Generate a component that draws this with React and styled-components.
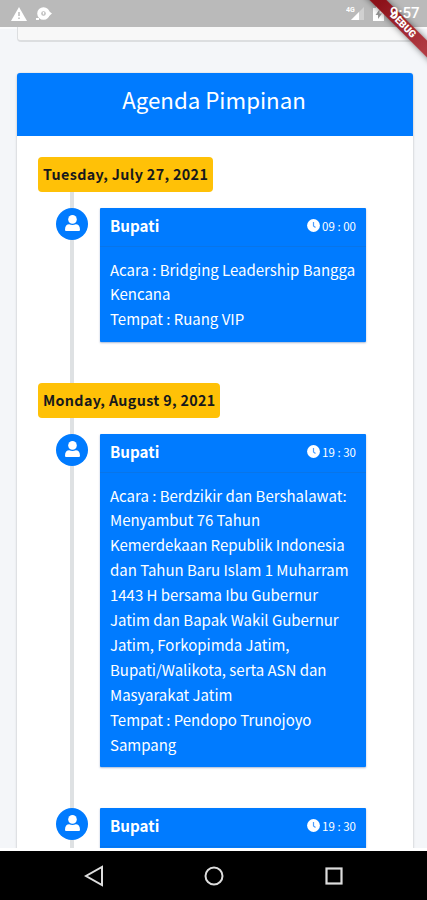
import React from "react"
import styled, { createGlobalStyle } from "styled-components";

const GlobalStyle = createGlobalStyle`
  * {
    box-sizing: border-box;
  }

  body {
    margin: 0;
    overflow: hidden;
    font-family: "Noto Sans CJK JP", "Noto Sans", sans-serif;
  }
`

const Screen = styled.div`
  position: relative;
  display: flex;
  flex-direction: column;
  width: 427px;
  height: 900px;
  overflow: hidden;
  background: #f4f6f9;
`

const StatusBar = styled.header`
  display: flex;
  align-items: center;
  flex: none;
  height: 27px;
  padding: 0 8px 0 11px;
  background: #bababa;
  box-shadow: 0 2px 0 #fbfcfd;
  color: #fff;
`

const StatusIcon = styled.svg`
  display: block;
  flex: none;
  margin-left: ${props => props.$gap || 0}px;
`

const StatusTime = styled.span`
  position: relative;
  z-index: 2;
  width: 29px;
  margin-left: 6px;
  font: 500 15px/27px Roboto, sans-serif;
  white-space: nowrap;
`

const Spacer = styled.div`
  flex: 1;
`

const Page = styled.main`
  flex: 1;
  min-height: 0;
  overflow: hidden;
  padding: 0 14px 0 17px;
`

const PreviousCard = styled.div`
  height: 15px;
  margin-bottom: 31px;
  border: 1px solid #dcdee0;
  border-top: 0;
  border-bottom-width: 2px;
  border-radius: 0 0 4px 4px;
  background: #f8f8f8;
`

const Card = styled.section`
  height: 900px;
  border-radius: 4px;
  background: #fff;
  box-shadow: 0 0 1px rgba(0, 0, 0, .2), 0 1px 3px rgba(0, 0, 0, .18);
`

const CardHeader = styled.h3`
  height: 63px;
  margin: 0;
  padding-right: 2px;
  border-radius: 3px 3px 0 0;
  background: #007bff;
  color: #fff;
  font-size: 22.3px;
  font-weight: 400;
  line-height: 52px;
  text-align: center;
`

const Timeline = styled.div`
  height: 800px;
  padding: 21px 0 0 21px;
  background: linear-gradient(#dee1e3, #dee1e3) 53px 21px / 4px 100% no-repeat;
`

const DateLabel = styled.div`
  width: ${props => props.$width}px;
  height: 35px;
  margin-bottom: 16px;
  padding-left: 5px;
  border-radius: 4px;
  background: #ffc107;
  color: #17191c;
  font-size: 14.3px;
  font-weight: 700;
  line-height: 34px;
  letter-spacing: ${props => props.$spacing}px;
  white-space: nowrap;
`

const Entry = styled.article`
  display: flex;
  align-items: flex-start;
  gap: 12px;
  padding-left: 18px;
  margin-bottom: ${props => props.$after}px;
`

const Avatar = styled.div`
  display: flex;
  align-items: center;
  justify-content: center;
  flex: none;
  width: 32px;
  height: 32px;
  padding-bottom: 2px;
  border-radius: 50%;
  background: #007bff;
`

const Item = styled.div`
  width: 266px;
  height: ${props => props.$height}px;
  border-radius: 1px;
  background: #007bff;
  color: #fff;
  box-shadow: 0 1px 2px rgba(0, 50, 130, .35);
`

const ItemHeader = styled.div`
  display: flex;
  align-items: center;
  height: 39px;
  padding: 0 10px 3px;
  border-bottom: 1px solid #0975e8;
`

const Name = styled.strong`
  flex: 1;
  padding-bottom: 2px;
  font-size: 15.2px;
  font-weight: 700;
`

const Time = styled.span`
  display: flex;
  align-items: center;
  gap: 2px;
  font-size: 11.5px;
  white-space: nowrap;
`

const ItemBody = styled.div`
  padding: 10.5px 0 0 10px;
  font-size: 15px;
  line-height: 24.9px;
  letter-spacing: -0.02px;
  white-space: pre;
`

const NavBar = styled.nav`
  display: flex;
  align-items: center;
  justify-content: center;
  flex: none;
  gap: 100px;
  height: 52px;
  border-top: 3px solid #fff;
  background: #000;
`

const DebugRibbon = styled.div`
  position: absolute;
  top: 19px;
  right: -31px;
  width: 110px;
  height: 12px;
  transform: rotate(45deg);
  background: linear-gradient(90deg, #8c1119 20%, #b13a42 80%);
  box-shadow: 0 0 6px rgba(0, 0, 0, .5);
  color: #fff;
  font: 900 10px/12px Roboto, sans-serif;
  text-align: center;
`

function Person() {
  return (
    <svg width="15" height="17" viewBox="0 0 15 17" fill="#fff">
      <circle cx="7.5" cy="4.4" r="4.3" />
      <path d="M0 14.7C0 11 1.8 9.3 4.2 9.3c2 1 4.6 1 6.6 0C13.2 9.3 15 11 15 14.7c0 .9-.6 1.4-1.4 1.4H1.4C.6 16.1 0 15.6 0 14.7Z" />
    </svg>
  )
}

function Clock() {
  return (
    <svg width="13" height="13" viewBox="0 0 13 13">
      <circle cx="6.5" cy="6.5" r="6.4" fill="#fff" />
      <path d="M6.5 3v4l2 1.5" fill="none" stroke="#4b9dff" strokeWidth="1.2" />
    </svg>
  )
}

const agenda = [
  {
    date: "Tuesday, July 27, 2021",
    width: 175,
    spacing: 0.36,
    time: "09 : 00",
    height: 134,
    after: 41,
    lines: ["Acara : Bridging Leadership Bangga", "Kencana", "Tempat : Ruang VIP"]
  },
  {
    date: "Monday, August 9, 2021",
    width: 182,
    spacing: 0.34,
    time: "19 : 30",
    height: 333,
    after: 41,
    lines: [
      "Acara : Berdzikir dan Bershalawat:",
      "Menyambut 76 Tahun",
      "Kemerdekaan Republik Indonesia",
      "dan Tahun Baru Islam 1 Muharram",
      "1443 H bersama Ibu Gubernur",
      "Jatim dan Bapak Wakil Gubernur",
      "Jatim, Forkopimda Jatim,",
      "Bupati/Walikota, serta ASN dan",
      "Masyarakat Jatim",
      "Tempat : Pendopo Trunojoyo",
      "Sampang"
    ]
  },
  { time: "19 : 30", height: 134, after: 0, lines: [] }
]

function App() {
  return (
    <Screen>
      <GlobalStyle />
      <StatusBar>
        <StatusIcon width="16" height="14" viewBox="0 0 16 14">
          <path d="M8 0 16 14H0Z" fill="#fff" />
          <path d="M8 5v4M8 10.5v1.5" stroke="#bababa" strokeWidth="1.5" />
        </StatusIcon>
        <StatusIcon $gap={9} width="16" height="14" viewBox="0 0 16 14">
          <circle cx="7.5" cy="6.5" r="4.3" fill="none" stroke="#fff" strokeWidth="4" />
          <path d="M12 3.5 16 6.5 12 10ZM0 11h3v2H0Z" fill="#fff" />
          <path d="M7.5 5v2.500" stroke="#fff" strokeWidth="1.5" />
        </StatusIcon>
        <Spacer />
        <StatusIcon width="19" height="15" viewBox="0 0 19 15">
          <path d="M18 1v13H5Z" fill="#d0d0d0" />
          <path d="M13 6v8H5Z" fill="#fff" />
          <text x="0" y="6" fill="#fff" fontFamily="Roboto" fontSize="7" fontWeight="700">4G</text>
        </StatusIcon>
        <StatusIcon $gap={8} width="11" height="15" viewBox="0 0 11 15">
          <path d="M3 0h5v2h3v13H0V2h3Z" fill="#fff" />
          <path d="M6.5 3.5 2.5 9H5v4l4-5.5H6.5Z" fill="#999" />
        </StatusIcon>
        <StatusTime>9:57</StatusTime>
      </StatusBar>
      <Page>
        <PreviousCard />
        <Card>
          <CardHeader>Agenda Pimpinan</CardHeader>
          <Timeline>
            {agenda.map((item, index) => (
              <React.Fragment key={index}>
                {item.date && <DateLabel $width={item.width} $spacing={item.spacing}>{item.date}</DateLabel>}
                <Entry $after={item.after}>
                  <Avatar><Person /></Avatar>
                  <Item $height={item.height}>
                    <ItemHeader>
                      <Name>Bupati</Name>
                      <Time><Clock />{item.time}</Time>
                    </ItemHeader>
                    <ItemBody>{item.lines.join("\n")}</ItemBody>
                  </Item>
                </Entry>
              </React.Fragment>
            ))}
          </Timeline>
        </Card>
      </Page>
      <NavBar>
        <svg width="20" height="22" viewBox="0 0 20 22" fill="none" stroke="#ddd" strokeWidth="2">
          <path d="M18 2v18L2 11Z" />
        </svg>
        <svg width="20" height="20" viewBox="0 0 20 20" fill="none" stroke="#ddd" strokeWidth="2">
          <circle cx="10" cy="10" r="8.5" />
        </svg>
        <svg width="20" height="20" viewBox="0 0 20 20" fill="none" stroke="#ddd" strokeWidth="2.2">
          <rect x="2.5" y="2.5" width="15" height="15" />
        </svg>
      </NavBar>
      <DebugRibbon>DEBUG</DebugRibbon>
    </Screen>
  )
}

export default App
